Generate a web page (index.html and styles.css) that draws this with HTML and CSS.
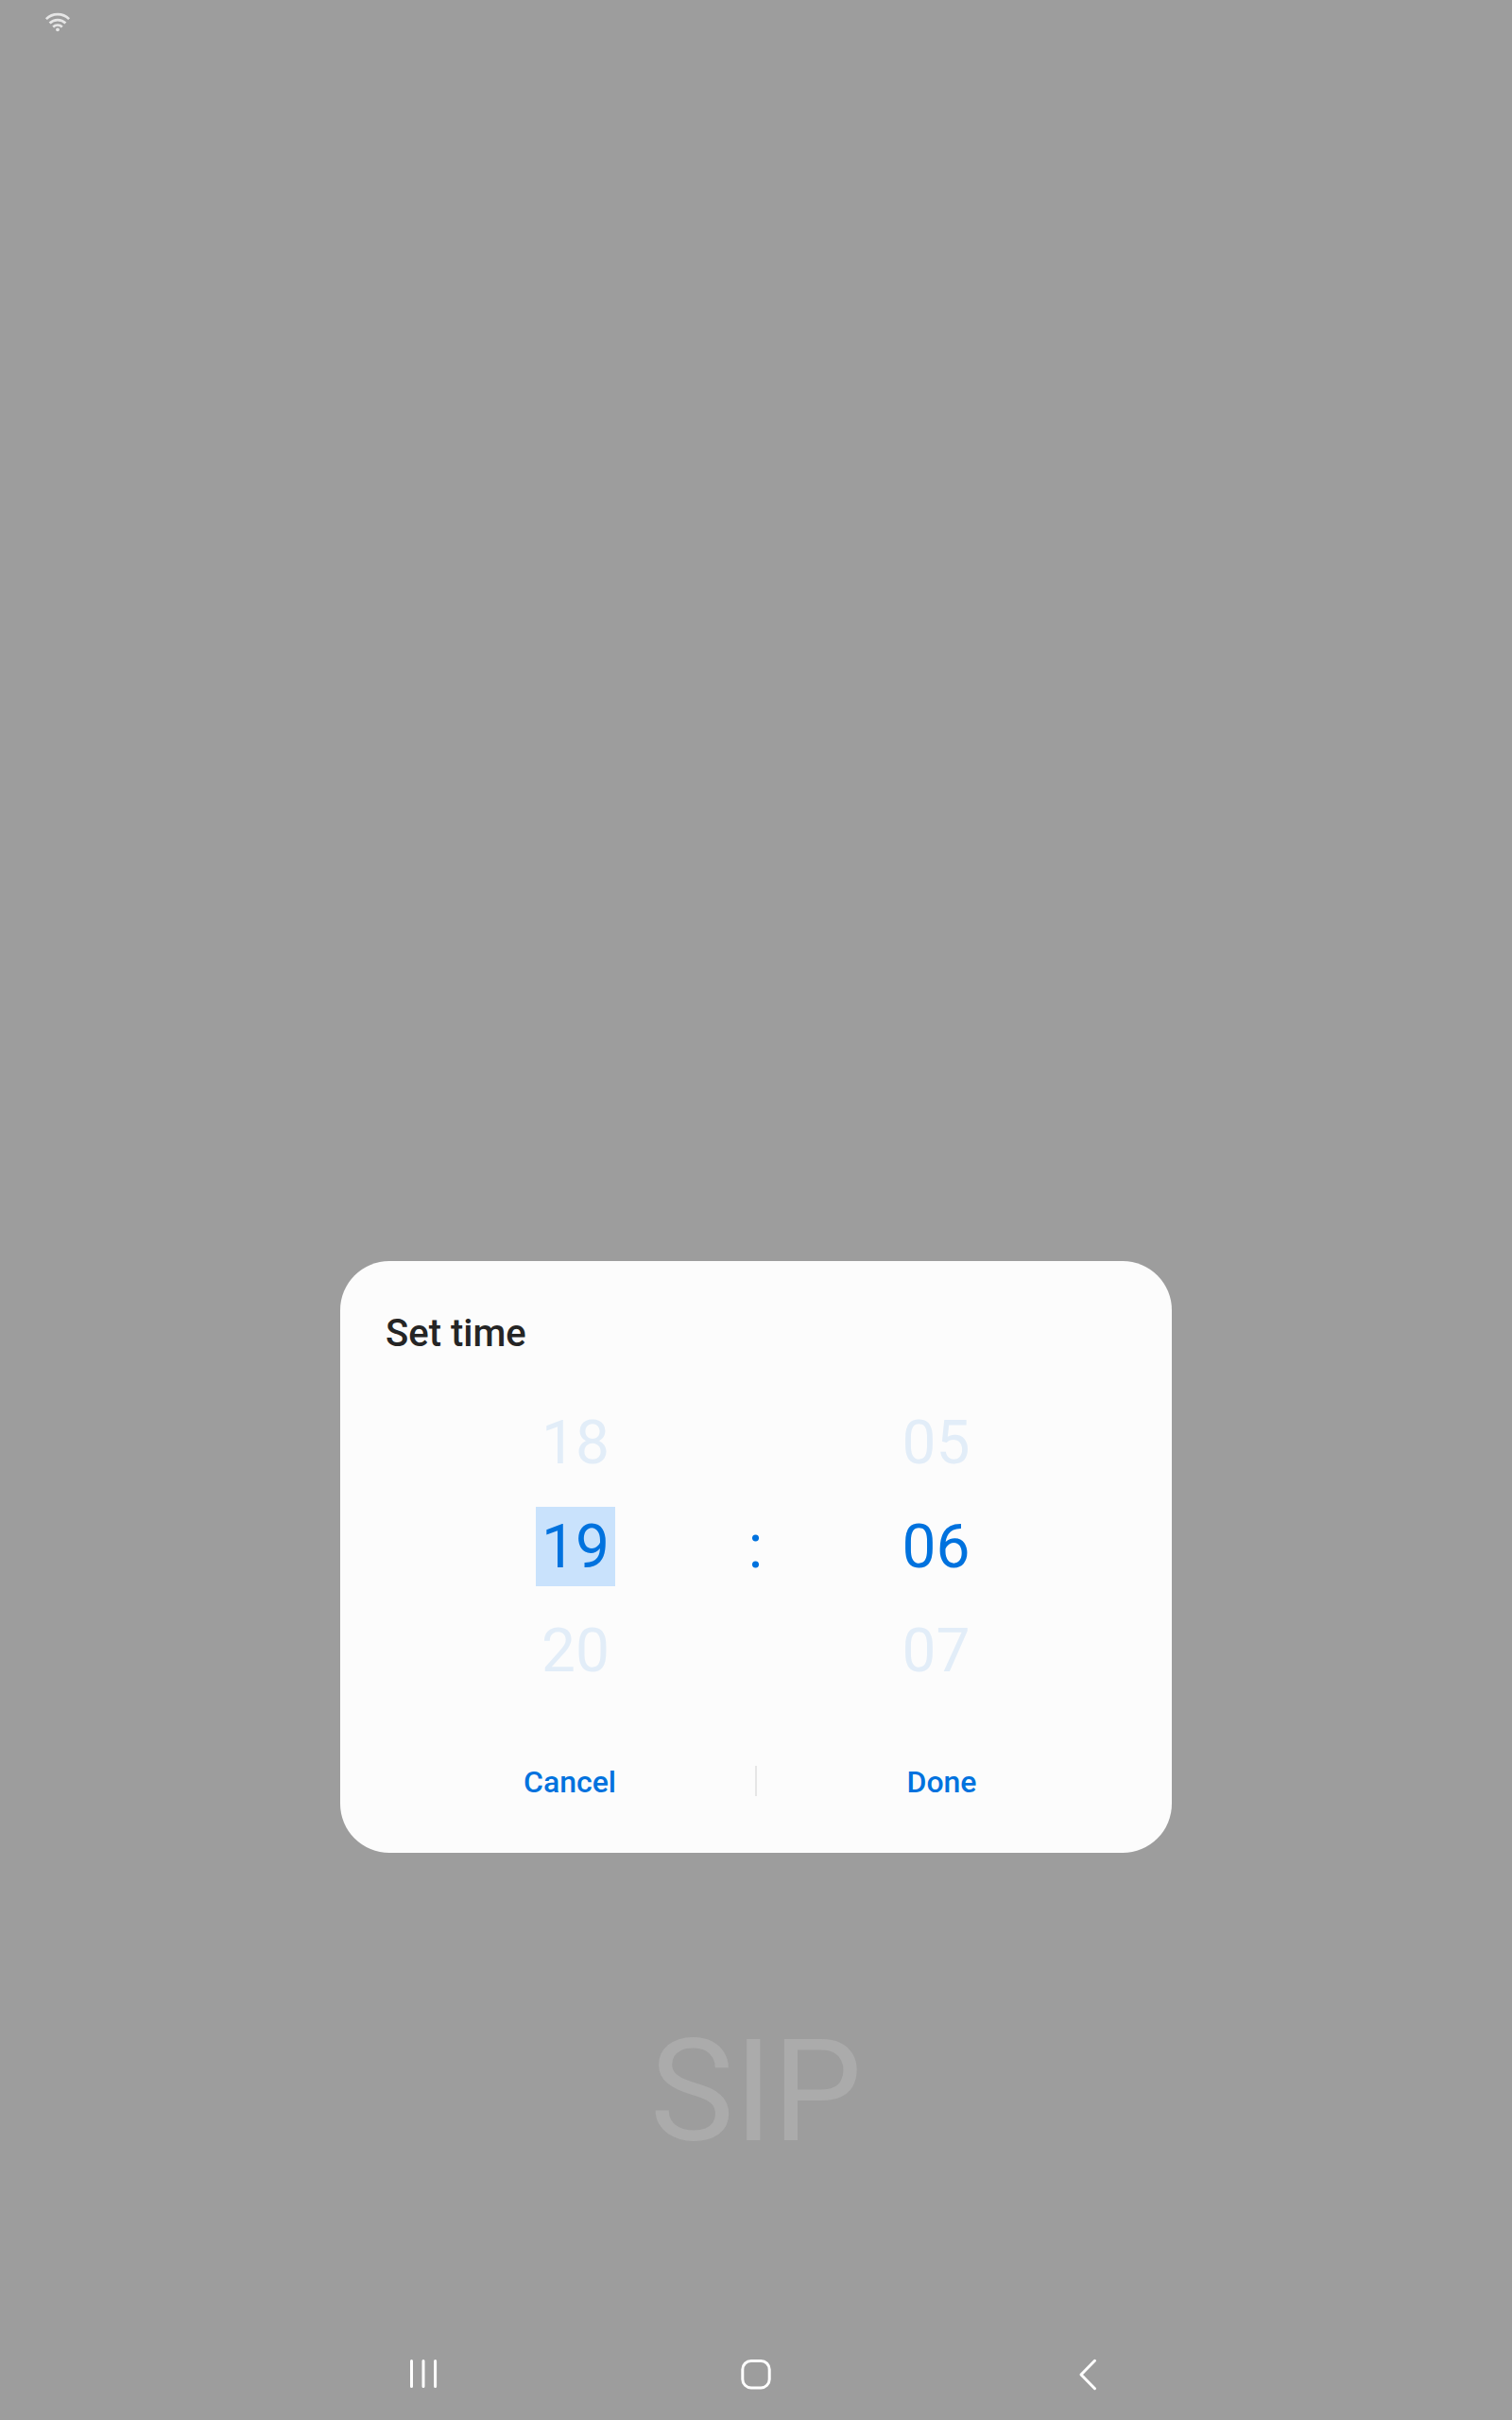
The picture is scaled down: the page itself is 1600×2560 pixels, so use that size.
FILE: index.html
```html
<!DOCTYPE html>
<html lang="en">
<head>
<meta charset="utf-8">
<title>Set time</title>
<link rel="stylesheet" href="styles.css">
</head>
<body>
<div class="screen">
  <header class="status-bar">
    <svg class="wifi" width="30" height="24" viewBox="0 0 30 24" fill="none" stroke="#e6e6e6" stroke-width="2.7">
      <path d="M2.9 8.1a17.2 17.2 0 0 1 24.2 0"/>
      <path d="M6.6 12.5a12 12 0 0 1 16.8 0"/>
      <path d="M10.2 16.4a7 7 0 0 1 9.6 0"/>
      <circle cx="15" cy="19.3" r="1.9" fill="#e6e6e6" stroke="none"/>
    </svg>
  </header>
  <main class="content">
    <section class="dialog" role="dialog" aria-labelledby="dialog-title">
      <h1 class="title" id="dialog-title">Set time</h1>
      <div class="picker">
        <div class="column">
          <span class="value">18</span>
          <span class="value current"><span class="selected">19</span></span>
          <span class="value">20</span>
        </div>
        <span class="colon">:</span>
        <div class="column">
          <span class="value">05</span>
          <span class="value current">06</span>
          <span class="value">07</span>
        </div>
      </div>
      <div class="actions">
        <button class="button cancel">Cancel</button>
        <span class="divider"></span>
        <button class="button done">Done</button>
      </div>
    </section>
    <div class="backdrop-label">SIP</div>
  </main>
  <nav class="nav-bar">
    <svg class="nav-icon" width="60" height="60" viewBox="0 0 60 60" fill="none" stroke="#fff" stroke-width="3" stroke-linecap="round">
      <path d="M15.5 17.5v27M28 17.5v27M40.6 17.5v27"/>
    </svg>
    <svg class="nav-icon" width="60" height="60" viewBox="0 0 60 60" fill="none" stroke="#fff" stroke-width="3">
      <rect x="15.8" y="17.5" width="28.4" height="28.4" rx="9"/>
    </svg>
    <svg class="nav-icon" width="60" height="60" viewBox="0 0 60 60" fill="none" stroke="#fff" stroke-width="3" stroke-linecap="round" stroke-linejoin="round">
      <path d="M38.5 17.3L24 32l14.5 14.7"/>
    </svg>
  </nav>
</div>
</body>
</html>
```
FILE: styles.css
```css
* {
  box-sizing: border-box;
}

body {
  margin: 0;
  font-family: Roboto, sans-serif;
}

.screen {
  display: flex;
  flex-direction: column;
  width: 1600px;
  height: 2560px;
  background: #9d9d9d;
}

.status-bar {
  height: 48px;
  padding: 12px 46px;
}

.wifi,
.nav-icon {
  display: block;
}

.content {
  flex: 1;
  display: flex;
  flex-direction: column;
  align-items: center;
  padding-top: 1286px;
}

.dialog {
  width: 880px;
  height: 626px;
  border-radius: 52px;
  background: #fcfcfc;
}

.title {
  margin: 0;
  padding: 49px 48px 0;
  font-size: 40px;
  line-height: 56px;
  font-weight: 500;
  color: #252525;
}

.picker {
  display: grid;
  grid-template-columns: 360px 21px 361px;
  align-items: center;
  width: 742px;
  margin: 32px auto 0;
}

.column {
  display: flex;
  flex-direction: column;
}

.value {
  display: flex;
  align-items: center;
  justify-content: center;
  height: 110px;
  padding-top: 2px;
  font-size: 64px;
  line-height: 84px;
  color: #e2edf8;
}

.current,
.colon {
  color: #0072de;
}

.selected {
  width: 84px;
  height: 84px;
  margin-top: -2px;
  line-height: 86px;
  text-align: center;
  background: #c9e2fc;
}

.colon {
  padding-top: 2px;
  font-size: 64px;
  line-height: 84px;
  text-align: center;
}

.actions {
  display: grid;
  grid-template-columns: 1fr 2px 1fr;
  align-items: center;
  width: 786px;
  height: 72px;
  margin: 47px auto 0;
}

.button {
  padding: 2px 0 0;
  border: 0;
  background: none;
  font: 500 32px/40px Roboto, sans-serif;
  color: #0072de;
}

.done {
  padding-right: 1px;
}

.divider {
  height: 32px;
  background: #e6e6e6;
}

.backdrop-label {
  margin-top: 165px;
  font-size: 150px;
  line-height: 176px;
  color: #ababab;
}

.nav-bar {
  display: flex;
  justify-content: center;
  gap: 290px;
  height: 80px;
}
```
